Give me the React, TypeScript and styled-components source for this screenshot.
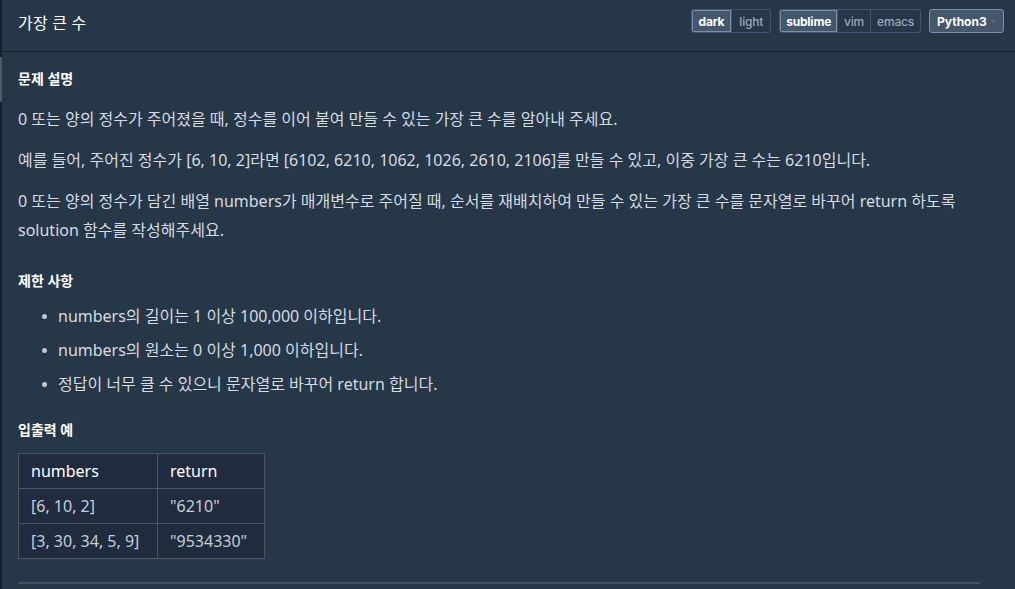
import React from 'react';
import styled, { createGlobalStyle } from 'styled-components';

const GlobalStyle = createGlobalStyle`
    html, body {
        margin: 0;
        padding: 0;
        background: #263747;
        overflow: hidden;
    }
    * {
        box-sizing: border-box;
    }
`;

const Page = styled.div`
    display: flex;
    width: 1015px;
    height: 589px;
    background: #263747;
    font-family: "Noto Sans", "Noto Sans CJK KR", sans-serif;
    overflow: hidden;
`;

const Gutter = styled.div`
    width: 2px;
    flex: none;
    background: #1b1f25;
    display: flex;
    flex-direction: column;
`;

const GutterThumb = styled.div`
    margin-top: 57px;
    height: 45px;
    background: #55585c;
`;

const Main = styled.div`
    flex: 1;
    display: flex;
    flex-direction: column;
    min-width: 0;
`;

const Header = styled.header`
    height: 52px;
    flex: none;
    display: flex;
    align-items: center;
    justify-content: space-between;
    padding: 0 11px 0 16px;
    border-bottom: 1px solid #172230;
`;

const Title = styled.h1`
    margin: 0 0 8px;
    font-size: 16px;
    font-weight: 400;
    color: #ffffff;
    letter-spacing: 0.2px;
`;

const Controls = styled.div`
    display: flex;
    align-items: center;
    gap: 8px;
    margin-bottom: 9px;
`;

const Segmented = styled.div`
    display: flex;
    border: 1px solid #44576c;
    border-radius: 3px;
    overflow: hidden;
`;

const Seg = styled.button<{ $active?: boolean; $pad?: number }>`
    height: 22px;
    padding: 0 ${p => p.$pad ?? 6}px;
    border: 0;
    border-left: 1px solid #44576c;
    font-family: Inter, "Noto Sans", sans-serif;
    font-size: 12px;
    letter-spacing: -0.2px;
    font-weight: ${p => (p.$active ? 700 : 500)};
    color: ${p => (p.$active ? '#ffffff' : '#98a8b9')};
    background: ${p => (p.$active ? '#44576c' : 'transparent')};
    box-shadow: ${p => (p.$active ? 'inset 0 0 0 1px #7a8fa5' : 'none')};
    &:first-child {
        border-left: 0;
    }
`;

const LangSelect = styled.div`
    width: 75px;
    height: 24px;
    display: flex;
    align-items: center;
    justify-content: space-between;
    padding: 0 7px;
    background: #44576c;
    border: 1px solid #7a8fa5;
    border-radius: 3px;
    font-family: Inter, "Noto Sans", sans-serif;
    font-size: 12px;
    font-weight: 700;
    color: #ffffff;
`;

const Caret = styled.span`
    width: 0;
    height: 0;
    border-left: 3px solid transparent;
    border-right: 3px solid transparent;
    border-top: 3px solid #6f6a5a;
`;

const Body = styled.div`
    flex: 1;
    padding: 17px 35px 0 16px;
`;

const Heading = styled.h5`
    margin: 0 0 13px;
    font-size: 14px;
    font-weight: 700;
    color: #ffffff;
    line-height: 20px;
`;

const Section = styled.div<{ $top: number }>`
    padding-top: ${p => p.$top}px;
`;

const Para = styled.p`
    margin: 0 0 12px;
    font-size: 16px;
    line-height: 29px;
    color: #d5dbe1;
`;

const List = styled.ul`
    margin: 0;
    padding-left: 40px;
    list-style: none;
`;

const Item = styled.li`
    position: relative;
    font-size: 16px;
    line-height: 24px;
    color: #d5dbe1;
    margin-bottom: 10px;
    &::before {
        content: '';
        position: absolute;
        left: -16px;
        top: 10px;
        width: 5px;
        height: 5px;
        border-radius: 50%;
        background: #bfc8d1;
    }
`;

const Table = styled.table`
    border-collapse: collapse;
    background: #202b3d;
    font-size: 16px;
`;

const Th = styled.th<{ $w: number }>`
    width: ${p => p.$w}px;
    height: 35px;
    padding: 0 12px;
    text-align: left;
    font-weight: 400;
    color: #ffffff;
    border: 1px solid #4e5560;
`;

const Td = styled.td`
    height: 35px;
    padding: 0 12px;
    color: #c3ceda;
    border: 1px solid #4e5560;
`;

const Rule = styled.hr`
    margin: 23px 0 0;
    border: 0;
    border-top: 2px solid #47525f;
`;

const rows = [
    ['[6, 10, 2]', '"6210"'],
    ['[3, 30, 34, 5, 9]', '"9534330"'],
];

export default function App() {
    return (
        <>
            <GlobalStyle />
            <Page>
                <Gutter>
                    <GutterThumb />
                </Gutter>
                <Main>
                    <Header>
                        <Title>가장 큰 수</Title>
                        <Controls>
                            <Segmented>
                                <Seg $active $pad={7}>dark</Seg>
                                <Seg $pad={7}>light</Seg>
                            </Segmented>
                            <Segmented>
                                <Seg $active>sublime</Seg>
                                <Seg>vim</Seg>
                                <Seg>emacs</Seg>
                            </Segmented>
                            <LangSelect>
                                Python3
                                <Caret />
                            </LangSelect>
                        </Controls>
                    </Header>
                    <Body>
                        <Heading>문제 설명</Heading>
                        <Section $top={3}>
                            <Para>0 또는 양의 정수가 주어졌을 때, 정수를 이어 붙여 만들 수 있는 가장 큰 수를 알아내 주세요.</Para>
                            <Para>예를 들어, 주어진 정수가 [6, 10, 2]라면 [6102, 6210, 1062, 1026, 2610, 2106]를 만들 수 있고, 이중 가장 큰 수는 6210입니다.</Para>
                            <Para>0 또는 양의 정수가 담긴 배열 numbers가 매개변수로 주어질 때, 순서를 재배치하여 만들 수 있는 가장 큰 수를 문자열로 바꾸어 return 하도록 solution 함수를 작성해주세요.</Para>
                        </Section>
                        <Section $top={14}>
                            <Heading>제한 사항</Heading>
                            <List>
                                <Item>numbers의 길이는 1 이상 100,000 이하입니다.</Item>
                                <Item>numbers의 원소는 0 이상 1,000 이하입니다.</Item>
                                <Item>정답이 너무 클 수 있으니 문자열로 바꾸어 return 합니다.</Item>
                            </List>
                        </Section>
                        <Section $top={14}>
                            <Heading>입출력 예</Heading>
                            <Table>
                                <thead>
                                    <tr>
                                        <Th $w={139}>numbers</Th>
                                        <Th $w={107}>return</Th>
                                    </tr>
                                </thead>
                                <tbody>
                                    {rows.map(r => (
                                        <tr key={r[0]}>
                                            <Td>{r[0]}</Td>
                                            <Td>{r[1]}</Td>
                                        </tr>
                                    ))}
                                </tbody>
                            </Table>
                        </Section>
                        <Rule />
                    </Body>
                </Main>
            </Page>
        </>
    );
}
